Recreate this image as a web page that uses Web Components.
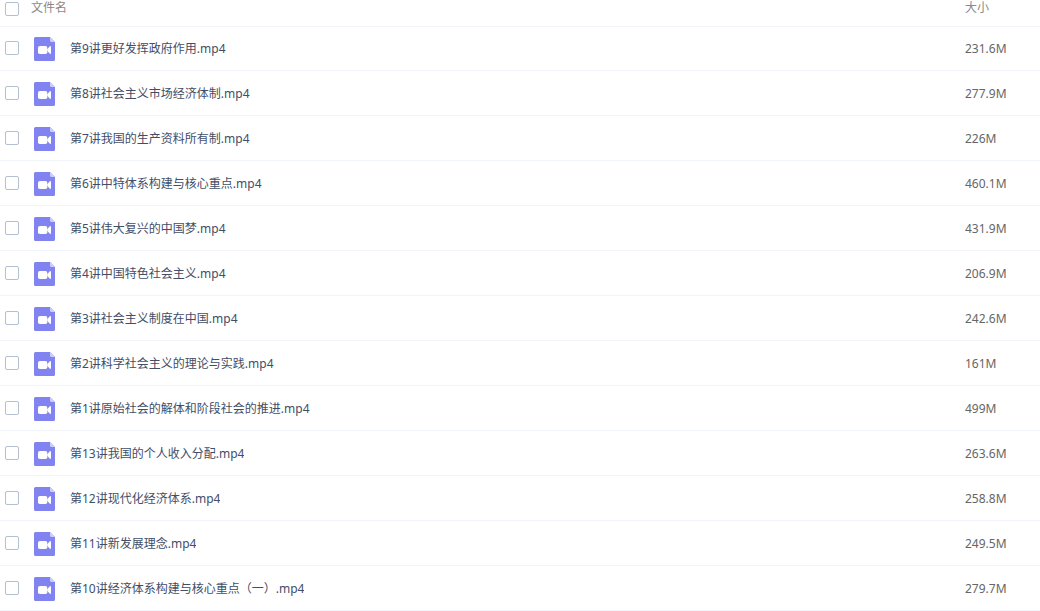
<!DOCTYPE html>
<html lang="zh-CN">
<head>
<meta charset="utf-8">
<meta name="viewport" content="width=device-width, initial-scale=1">
<title>文件列表</title>
<style>
  body { margin: 0; background: #fff; font: 12px/16px "Noto Sans", "Noto Sans CJK SC", sans-serif; }
</style>
</head>
<body>
<file-list>
  <file-item size="231.6M">第9讲更好发挥政府作用.mp4</file-item>
  <file-item size="277.9M">第8讲社会主义市场经济体制.mp4</file-item>
  <file-item size="226M">第7讲我国的生产资料所有制.mp4</file-item>
  <file-item size="460.1M">第6讲中特体系构建与核心重点.mp4</file-item>
  <file-item size="431.9M">第5讲伟大复兴的中国梦.mp4</file-item>
  <file-item size="206.9M">第4讲中国特色社会主义.mp4</file-item>
  <file-item size="242.6M">第3讲社会主义制度在中国.mp4</file-item>
  <file-item size="161M">第2讲科学社会主义的理论与实践.mp4</file-item>
  <file-item size="499M">第1讲原始社会的解体和阶段社会的推进.mp4</file-item>
  <file-item size="263.6M">第13讲我国的个人收入分配.mp4</file-item>
  <file-item size="258.8M">第12讲现代化经济体系.mp4</file-item>
  <file-item size="249.5M">第11讲新发展理念.mp4</file-item>
  <file-item size="279.7M">第10讲经济体系构建与核心重点（一）.mp4</file-item>
</file-list>

<template id="video-icon">
  <style>
    :host { display: block; flex: none; width: 21px; height: 24px; }
    svg { display: block; width: 100%; height: 100%; }
  </style>
  <svg viewBox="0 0 21 24" aria-hidden="true">
    <path fill="#8183f1" d="M1.500 0H16l5 5v17.500a1.500 1.500 0 0 1-1.500 1.500h-18A1.500 1.500 0 0 1 0 22.500v-21A1.500 1.500 0 0 1 1.500 0z"/>
    <path fill="#cdcefa" d="M16 0l5 5h-3.500A1.500 1.500 0 0 1 16 3.500z"/>
    <rect x="4" y="9" width="9.300" height="8" rx="1.800" fill="#fff"/>
    <path fill="#fff" d="M13.300 12.200l2.300-2.700q1.400-1 1.400.6v5.800q0 1.600-1.400.6l-2.300-2.700z"/>
  </svg>
</template>

<template id="file-item">
  <style>:host { display: inline; }</style>
  <slot></slot>
</template>

<template id="file-list">
  <style>
    :host { display: block; }
    table { width: 100%; table-layout: fixed; border-collapse: separate; border-spacing: 0; }
    .pick { width: 31px; }
    .size { width: 75px; }
    th, td { box-sizing: border-box; padding: 0; text-align: left; font-weight: 400; }
    th { height: 26px; vertical-align: top; color: #888; }
    td { height: 45px; vertical-align: middle; color: #666; border-bottom: 1px solid #f1f5fb; }
    td:last-child { padding-top: 2px; }
    tbody tr:first-child td { box-shadow: inset 0 1px #f1f5fb; }
    input { appearance: none; box-sizing: border-box; display: block; width: 14px; height: 14px; margin: 0 0 0 5px; border: 1px solid #b4bfd0; border-radius: 2px; background: #fff; }
    th input { margin-top: 2px; }
    input:checked { background: #8183f1; border-color: #8183f1; }
    .name { display: flex; align-items: center; gap: 15px; padding: 1px 0 0 3px; }
    label { color: #424e67; white-space: nowrap; overflow: hidden; text-overflow: ellipsis; }
  </style>
  <table>
    <colgroup><col class="pick"><col><col class="size"></colgroup>
    <thead>
      <tr><th scope="col"><input type="checkbox" aria-label="全选"></th><th scope="col">文件名</th><th scope="col">大小</th></tr>
    </thead>
    <tbody></tbody>
  </table>
</template>

<script>
  class TemplateElement extends HTMLElement {
    constructor() {
      super();
      this.attachShadow({ mode: 'open' })
        .append(document.getElementById(this.localName).content.cloneNode(true));
    }
  }

  class VideoIcon extends TemplateElement {}
  class FileItem extends TemplateElement {}

  class FileList extends TemplateElement {
    connectedCallback() {
      const body = this.shadowRoot.querySelector('tbody');
      body.replaceChildren();
      [...this.querySelectorAll('file-item')].forEach((item, i) => {
        item.slot = 'file-' + i;
        const row = body.insertRow();
        row.innerHTML =
          `<td><input type="checkbox" id="pick-${i}"></td>
           <td><div class="name"><video-icon></video-icon><label for="pick-${i}"><slot name="file-${i}"></slot></label></div></td>
           <td></td>`;
        row.cells[2].textContent = item.getAttribute('size');
      });
      const all = this.shadowRoot.querySelector('thead input');
      all.onchange = () => body.querySelectorAll('input').forEach(box => { box.checked = all.checked; });
    }
  }

  customElements.define('video-icon', VideoIcon);
  customElements.define('file-item', FileItem);
  customElements.define('file-list', FileList);
</script>
</body>
</html>
